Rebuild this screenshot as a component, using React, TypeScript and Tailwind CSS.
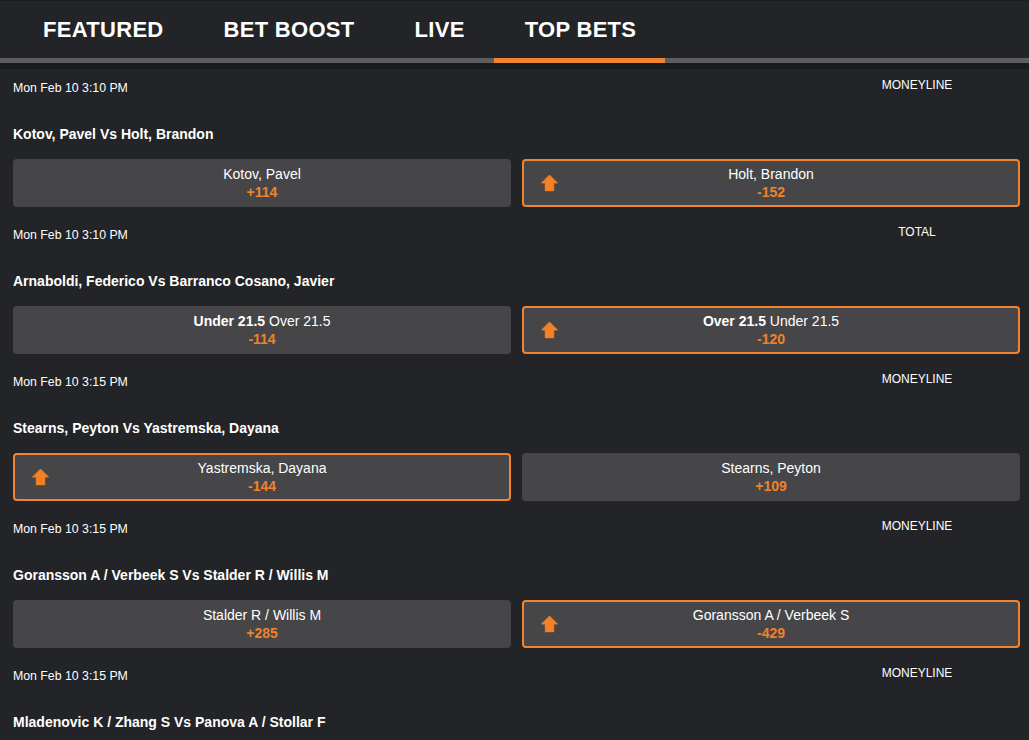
import type { ReactNode } from 'react'

type Pick = {
  label: ReactNode
  odds: string
  boosted?: boolean
}

type Event = {
  time: string
  market: string
  title: string
  picks?: [Pick, Pick]
}

const tabs = ['FEATURED', 'BET BOOST', 'LIVE', 'TOP BETS']

const events: Event[] = [
  {
    time: 'Mon Feb 10 3:10 PM',
    market: 'MONEYLINE',
    title: 'Kotov, Pavel Vs Holt, Brandon',
    picks: [
      { label: 'Kotov, Pavel', odds: '+114' },
      { label: 'Holt, Brandon', odds: '-152', boosted: true },
    ],
  },
  {
    time: 'Mon Feb 10 3:10 PM',
    market: 'TOTAL',
    title: 'Arnaboldi, Federico Vs Barranco Cosano, Javier',
    picks: [
      {
        label: (
          <>
            <b>Under 21.5</b> Over 21.5
          </>
        ),
        odds: '-114',
      },
      {
        label: (
          <>
            <b>Over 21.5</b> Under 21.5
          </>
        ),
        odds: '-120',
        boosted: true,
      },
    ],
  },
  {
    time: 'Mon Feb 10 3:15 PM',
    market: 'MONEYLINE',
    title: 'Stearns, Peyton Vs Yastremska, Dayana',
    picks: [
      { label: 'Yastremska, Dayana', odds: '-144', boosted: true },
      { label: 'Stearns, Peyton', odds: '+109' },
    ],
  },
  {
    time: 'Mon Feb 10 3:15 PM',
    market: 'MONEYLINE',
    title: 'Goransson A / Verbeek S Vs Stalder R / Willis M',
    picks: [
      { label: 'Stalder R / Willis M', odds: '+285' },
      { label: 'Goransson A / Verbeek S', odds: '-429', boosted: true },
    ],
  },
  {
    time: 'Mon Feb 10 3:15 PM',
    market: 'MONEYLINE',
    title: 'Mladenovic K / Zhang S Vs Panova A / Stollar F',
  },
]

function UpArrow() {
  return (
    <svg width="17" height="17" viewBox="0 0 16 16" className="text-[#f58025]">
      <path d="M8 0.5 L15.5 8 H12 V15.5 H4 V8 H0.5 Z" fill="currentColor" strokeLinejoin="round" stroke="currentColor" strokeWidth="0.8" />
    </svg>
  )
}

function PickButton({ pick }: { pick: Pick }) {
  return (
    <button
      className={
        'relative h-[48px] rounded-[4px] bg-[#464648] flex flex-col items-center justify-center text-[14px] leading-[18px] text-white border-2 ' +
        (pick.boosted ? 'border-[#ef8530]' : 'border-[#464648]')
      }
    >
      {pick.boosted && (
        <span className="absolute left-[17px] top-1/2 -translate-y-1/2 flex">
          <UpArrow />
        </span>
      )}
      <span>{pick.label}</span>
      <span className="font-bold text-[#f0822a]">{pick.odds}</span>
    </button>
  )
}

function EventBlock({ ev }: { ev: Event }) {
  return (
    <div className="flex flex-col pb-[9px]">
      <div className="h-[39px] flex items-center justify-between">
        <span className="text-[12.3px] text-white">{ev.time}</span>
        <span className="w-[206px] text-center text-[12px] text-white mb-[7px]">{ev.market}</span>
      </div>
      <div className="h-[51px] flex items-center pt-[2px] text-[14px] font-bold text-white">{ev.title}</div>
      {ev.picks && (
        <div className="grid grid-cols-2 gap-[11px]">
          <PickButton pick={ev.picks[0]} />
          <PickButton pick={ev.picks[1]} />
        </div>
      )}
    </div>
  )
}

export default function App() {
  return (
    <div className="w-[1029px] h-[740px] overflow-hidden bg-[#232427] font-['Liberation_Sans',Arial,sans-serif]">
      <div className="border-t border-[#1b1c1e]">
        <div className="flex pl-[13px] h-[57px]">
          {tabs.map((t) => (
            <div key={t} className="flex items-center px-[30px] text-[22px] font-bold tracking-[0.3px] text-white">
              {t}
            </div>
          ))}
        </div>
        <div className="flex h-[5px] bg-[#5e5e60] pl-[494px]">
          <div className="w-[171px] bg-[#ef8530]" />
        </div>
        <div className="h-[6px] bg-[#1a1b1d]" />
      </div>
      <div className="pl-[13px] pr-[9px]">
        {events.map((ev, i) => (
          <EventBlock key={i} ev={ev} />
        ))}
      </div>
    </div>
  )
}
